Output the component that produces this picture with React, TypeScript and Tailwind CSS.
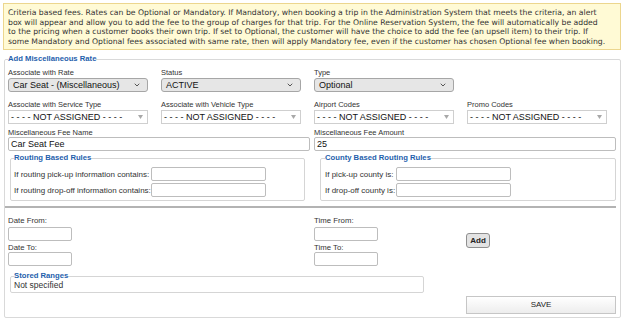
import React from 'react';
import { ChevronDown } from 'lucide-react';

const notice = [
  'Criteria based fees. Rates can be Optional or Mandatory. If Mandatory, when booking a trip in the Administration System that meets the criteria, an alert',
  'box will appear and allow you to add the fee to the group of charges for that trip. For the Online Reservation System, the fee will automatically be added',
  'to the pricing when a customer books their own trip. If set to Optional, the customer will have the choice to add the fee (an upsell item) to their trip. If',
  'some Mandatory and Optional fees associated with same rate, then will apply Mandatory fee, even if the customer has chosen Optional fee when booking.',
];

function Label({ children, className = '' }: { children: React.ReactNode; className?: string }) {
  return <div className={`whitespace-nowrap text-[7.5px] leading-[9px] text-[#333] ${className}`}>{children}</div>;
}

function Legend({ children, className = '' }: { children: React.ReactNode; className?: string }) {
  return (
    <legend className={`px-0 text-[7.7px] font-bold leading-[10px] text-[#1f5fac] ${className}`}>{children}</legend>
  );
}

function GraySelect({ value }: { value: string }) {
  return (
    <div className="mt-[1px] flex h-[14px] w-[140px] items-center justify-between rounded-[3px] border border-[#a6a6a6] bg-[#e6e6e6] pl-[4px] pr-[6px]">
      <span className="text-[9px] leading-none text-[#111]">{value}</span>
      <ChevronDown size={8} strokeWidth={3} className="text-[#555]" />
    </div>
  );
}

function PlainSelect() {
  return (
    <div className="mt-[1px] flex h-[14px] w-[140px] items-center justify-between border border-[#cfcfcf] bg-white pl-[2px] pr-[4px]">
      <span className="whitespace-nowrap text-[9px] leading-none text-[#111]">- - - - NOT ASSIGNED - - - -</span>
      <svg width="5" height="4" viewBox="0 0 5 4">
        <polygon points="0,0 5,0 2.5,4" fill="#a8a8a8" />
      </svg>
    </div>
  );
}

function TextBox({ value = '', className = '' }: { value?: string; className?: string }) {
  return (
    <div className={`flex h-[14px] items-center rounded-[2px] border border-[#bdbdbd] bg-white pl-[2px] text-[9px] leading-none text-[#111] ${className}`}>
      {value}
    </div>
  );
}

export default function App() {
  return (
    <div className="h-[321px] w-[624px] overflow-hidden bg-white font-['Liberation_Sans',Arial,sans-serif]">
      <div className="ml-[3px] mt-[3px] h-[47px] w-[618px] border border-[#ecd68e] bg-[#fffad5] pl-[4px] pt-[4px] font-['DejaVu_Sans',Verdana,sans-serif] text-[7.7px] leading-[9.7px] text-[#333]">
        {notice.map((line, i) => (
          <div key={i} className="whitespace-nowrap">{line}</div>
        ))}
      </div>

      <fieldset className="ml-[4px] mt-[4px] w-[616px] rounded-[2px] border border-[#d9d9d9] px-0 pb-[3px] pt-[4px]">
        <Legend className="ml-[3px]">Add Miscellaneous Rate</Legend>

        <div className="grid grid-cols-[153px_153px_153px_153px] pl-[3px]">
          <div>
            <Label>Associate with Rate</Label>
            <GraySelect value="Car Seat - (Miscellaneous)" />
          </div>
          <div>
            <Label>Status</Label>
            <GraySelect value="ACTIVE" />
          </div>
          <div>
            <Label>Type</Label>
            <GraySelect value="Optional" />
          </div>
        </div>

        <div className="mt-[8px] grid grid-cols-[153px_153px_153px_153px] pl-[3px]">
          <div>
            <Label>Associate with Service Type</Label>
            <PlainSelect />
          </div>
          <div>
            <Label>Associate with Vehicle Type</Label>
            <PlainSelect />
          </div>
          <div>
            <Label>Airport Codes</Label>
            <PlainSelect />
          </div>
          <div>
            <Label>Promo Codes</Label>
            <PlainSelect />
          </div>
        </div>

        <div className="mt-[4px] grid grid-cols-[306px_306px] pl-[3px]">
          <div>
            <Label>Miscellaneous Fee Name</Label>
            <TextBox value="Car Seat Fee" className="w-[302px]" />
          </div>
          <div>
            <Label>Miscellaneous Fee Amount</Label>
            <TextBox value="25" className="w-[302px]" />
          </div>
        </div>

        <div className="mt-[2px] flex items-start gap-[15px] pl-[5px]">
          <fieldset className="w-[295px] rounded-[2px] border border-[#d5d5d5] px-[3px] pb-[3px] pt-[4px]">
            <Legend>Routing Based Rules</Legend>
            <div className="flex flex-col gap-[2px]">
              <div className="flex items-center">
                <div className="w-[137px]"><Label className="text-[8px]">If routing pick-up information contains:</Label></div>
                <TextBox className="w-[115px]" />
              </div>
              <div className="flex items-center">
                <div className="w-[137px]"><Label className="text-[8px]">If routing drop-off information contains:</Label></div>
                <TextBox className="w-[115px]" />
              </div>
            </div>
          </fieldset>
          <fieldset className="w-[296px] rounded-[2px] border border-[#d5d5d5] px-[4px] pb-[3px] pt-[4px]">
            <Legend>County Based Routing Rules</Legend>
            <div className="flex flex-col gap-[2px]">
              <div className="flex items-center">
                <div className="w-[71px]"><Label className="text-[8px]">If pick-up county is:</Label></div>
                <TextBox className="w-[115px]" />
              </div>
              <div className="flex items-center">
                <div className="w-[71px]"><Label className="text-[8px]">If drop-off county is:</Label></div>
                <TextBox className="w-[115px]" />
              </div>
            </div>
          </fieldset>
        </div>

        <div className="mt-[5px] h-[2px] w-[611px] bg-[#b3b3b3]" />

        <div className="mt-[8px] flex items-start pl-[3px]">
          <div className="w-[306px]">
            <Label className="text-[7.8px]">Date From:</Label>
            <TextBox className="mt-[2px] w-[64px]" />
            <Label className="mt-[2px] text-[7.8px]">Date To:</Label>
            <TextBox className="w-[64px]" />
          </div>
          <div className="w-[152px]">
            <Label className="text-[7.8px]">Time From:</Label>
            <TextBox className="mt-[2px] w-[64px]" />
            <Label className="mt-[2px] text-[7.8px]">Time To:</Label>
            <TextBox className="w-[64px]" />
          </div>
          <button className="mt-[17px] block h-[15px] w-[24px] rounded-[3px] border border-[#8f8f8f] bg-[#e3e3e3] text-[8px] font-bold leading-none text-[#222]">
            Add
          </button>
        </div>

        <fieldset className="ml-[5px] mt-[5px] w-[414px] rounded-[2px] border border-[#d5d5d5] px-[2px] pb-[2px] pt-0">
          <Legend className="ml-[1px]">Stored Ranges</Legend>
          <div className="pl-[1px] text-[8.5px] leading-[9px] text-[#333]">Not specified</div>
        </fieldset>

        <div className="mt-[3px] pl-[461px]">
          <button className="block h-[18px] w-[150px] border border-[#c6c6c6] bg-gradient-to-b from-white to-[#ededed] text-[8px] leading-none text-[#222]">
            SAVE
          </button>
        </div>
      </fieldset>
    </div>
  );
}
